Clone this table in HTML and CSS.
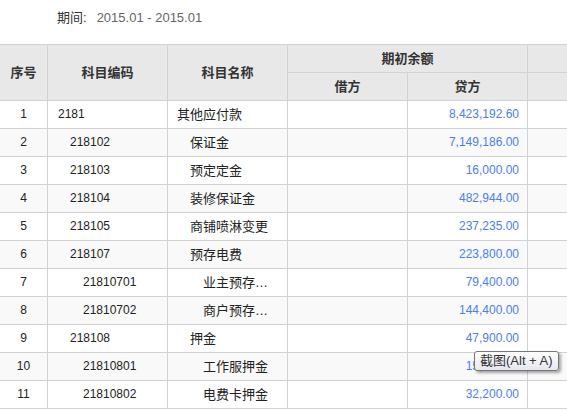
FILE: index.html
```html
<!DOCTYPE html>
<html lang="zh-CN">
<head>
<meta charset="utf-8">
<title>科目余额</title>
<link rel="stylesheet" href="styles.css">
</head>
<body>
<div class="page">
  <div class="period">
    <span class="period-label">期间:</span>
    <span class="period-value">2015.01 - 2015.01</span>
  </div>
  <table class="grid">
    <colgroup>
      <col class="c-seq"><col class="c-code"><col class="c-name"><col class="c-amt"><col class="c-amt"><col class="c-amt">
    </colgroup>
    <thead>
      <tr>
        <th rowspan="2">序号</th>
        <th rowspan="2">科目编码</th>
        <th rowspan="2">科目名称</th>
        <th colspan="2">期初余额</th>
        <th></th>
      </tr>
      <tr>
        <th>借方</th>
        <th>贷方</th>
        <th></th>
      </tr>
    </thead>
    <tbody>
      <tr><td class="seq">1</td><td class="code l1">2181</td><td class="name l1">其他应付款</td><td></td><td class="num">8,423,192.60</td><td></td></tr>
      <tr><td class="seq">2</td><td class="code l2">218102</td><td class="name l2">保证金</td><td></td><td class="num">7,149,186.00</td><td></td></tr>
      <tr><td class="seq">3</td><td class="code l2">218103</td><td class="name l2">预定定金</td><td></td><td class="num">16,000.00</td><td></td></tr>
      <tr><td class="seq">4</td><td class="code l2">218104</td><td class="name l2">装修保证金</td><td></td><td class="num">482,944.00</td><td></td></tr>
      <tr><td class="seq">5</td><td class="code l2">218105</td><td class="name l2">商铺喷淋变更</td><td></td><td class="num">237,235.00</td><td></td></tr>
      <tr><td class="seq">6</td><td class="code l2">218107</td><td class="name l2">预存电费</td><td></td><td class="num">223,800.00</td><td></td></tr>
      <tr><td class="seq">7</td><td class="code l3">21810701</td><td class="name l3">业主预存电费</td><td></td><td class="num">79,400.00</td><td></td></tr>
      <tr><td class="seq">8</td><td class="code l3">21810702</td><td class="name l3">商户预存电费</td><td></td><td class="num">144,400.00</td><td></td></tr>
      <tr><td class="seq">9</td><td class="code l2">218108</td><td class="name l2">押金</td><td></td><td class="num">47,900.00</td><td></td></tr>
      <tr><td class="seq">10</td><td class="code l3">21810801</td><td class="name l3">工作服押金</td><td></td><td class="num">15,700.00</td><td></td></tr>
      <tr><td class="seq">11</td><td class="code l3">21810802</td><td class="name l3">电费卡押金</td><td></td><td class="num">32,200.00</td><td></td></tr>
    </tbody>
  </table>
  <div class="tooltip">截图(Alt + A)</div>
</div>
</body>
</html>
```

FILE: styles.css
```css
html, body {
  margin: 0;
  padding: 0;
  background: #fff;
  overflow: hidden;
}

body {
  font-family: "Liberation Sans", "Noto Sans CJK SC", sans-serif;
  color: #222;
}

.page {
  position: relative;
  width: 567px;
  height: 410px;
  overflow: hidden;
}

.period {
  height: 44px;
  box-sizing: border-box;
  padding: 9px 0 0 57px;
  display: flex;
  align-items: flex-start;
  gap: 10px;
  font-size: 13px;
  line-height: 18px;
}

.period-label {
  color: #333;
}

.period-value {
  color: #666;
}

.grid {
  border-collapse: separate;
  border-spacing: 0;
  table-layout: fixed;
  width: 648px;
  border-top: 1px solid #d2d2d2;
}

.c-seq { width: 48px; }
.c-code { width: 120px; }
.c-name { width: 120px; }
.c-amt { width: 120px; }

.grid th,
.grid td {
  box-sizing: border-box;
  padding: 0;
  line-height: 27px;
  border-right: 1px solid #d2d2d2;
  border-bottom: 1px solid #d2d2d2;
  white-space: nowrap;
  overflow: hidden;
}

.grid th {
  background: #e8e8e8;
  font-size: 13px;
  font-weight: bold;
  color: #333;
  text-align: center;
}

.grid td {
  font-size: 12px;
  color: #222;
  background: #fff;
}

.grid tbody tr:nth-child(even) td {
  background: #f9f9f9;
}

.seq {
  text-align: center;
}

.code.l1 { padding-left: 10px; }
.code.l2 { padding-left: 22px; }
.code.l3 { padding-left: 35px; }

.grid td.name {
  font-size: 13px;
  text-overflow: ellipsis;
  padding-right: 10px;
}

.name.l1 { padding-left: 9px; }
.name.l2 { padding-left: 22px; }
.name.l3 { padding-left: 35px; }

.grid td.num {
  text-align: right;
  padding-right: 8px;
  color: #4a7ef2;
}

.tooltip {
  position: absolute;
  left: 474px;
  top: 351px;
  height: 20px;
  box-sizing: border-box;
  padding: 0 5px;
  border: 1px solid #767676;
  border-radius: 3px;
  background: linear-gradient(#ffffff, #e6e6ef);
  box-shadow: 2px 2px 3px rgba(0, 0, 0, 0.35);
  font-size: 13px;
  line-height: 18px;
  color: #333;
  white-space: nowrap;
}
```
